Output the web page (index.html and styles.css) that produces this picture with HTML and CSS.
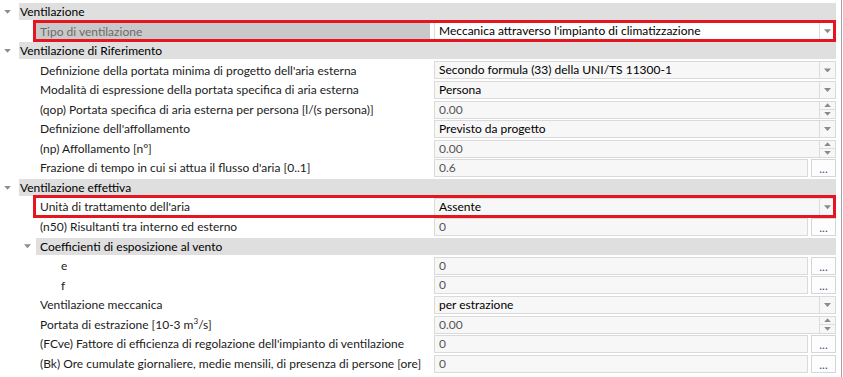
FILE: index.html
```html
<!DOCTYPE html>
<html lang="it">
<head>
    <meta charset="UTF-8">
    <meta name="viewport" content="width=device-width, initial-scale=1.0">
    <title>Ventilazione</title>
    <link rel="stylesheet" href="styles.css">
</head>
<body>
    <div class="grid">
        <div class="row cat"><span class="tog"></span><div class="band">Ventilazione</div></div>
        <div class="row prop sel mark">
            <div class="label">Tipo di ventilazione</div>
            <div class="val"><div class="box"><span class="txt">Meccanica attraverso l'impianto di climatizzazione</span><span class="drop"></span></div></div>
        </div>

        <div class="row cat"><span class="tog"></span><div class="band">Ventilazione di Riferimento</div></div>
        <div class="row prop">
            <div class="label">Definizione della portata minima di progetto dell'aria esterna</div>
            <div class="val"><div class="box"><span class="txt">Secondo formula (33) della UNI/TS 11300-1</span><span class="drop"></span></div></div>
        </div>
        <div class="row prop">
            <div class="label">Modalità di espressione della portata specifica di aria esterna</div>
            <div class="val"><div class="box"><span class="txt">Persona</span><span class="drop"></span></div></div>
        </div>
        <div class="row prop">
            <div class="label">(qop) Portata specifica di aria esterna per persona [l/(s persona)]</div>
            <div class="val"><div class="box"><span class="txt num">0.00</span><span class="spin"><i class="up"></i><i class="down"></i></span></div></div>
        </div>
        <div class="row prop">
            <div class="label">Definizione dell'affollamento</div>
            <div class="val"><div class="box"><span class="txt">Previsto da progetto</span><span class="drop"></span></div></div>
        </div>
        <div class="row prop">
            <div class="label">(np) Affollamento [n°]</div>
            <div class="val"><div class="box"><span class="txt num">0.00</span><span class="spin"><i class="up"></i><i class="down"></i></span></div></div>
        </div>
        <div class="row prop">
            <div class="label">Frazione di tempo in cui si attua il flusso d'aria [0..1]</div>
            <div class="val"><div class="box"><span class="txt num">0.6</span></div><span class="btn">...</span></div>
        </div>

        <div class="row cat"><span class="tog"></span><div class="band">Ventilazione effettiva</div></div>
        <div class="row prop mark">
            <div class="label">Unità di trattamento dell'aria</div>
            <div class="val"><div class="box"><span class="txt">Assente</span><span class="drop"></span></div></div>
        </div>
        <div class="row prop">
            <div class="label">(n50) Risultanti tra interno ed esterno</div>
            <div class="val"><div class="box"><span class="txt num">0</span></div><span class="btn">...</span></div>
        </div>
        <div class="row cat sub"><span class="tog"></span><div class="band">Coefficienti di esposizione al vento</div></div>
        <div class="row prop deep">
            <div class="label">e</div>
            <div class="val"><div class="box"><span class="txt num">0</span></div><span class="btn">...</span></div>
        </div>
        <div class="row prop deep">
            <div class="label">f</div>
            <div class="val"><div class="box"><span class="txt num">0</span></div><span class="btn">...</span></div>
        </div>
        <div class="row prop">
            <div class="label">Ventilazione meccanica</div>
            <div class="val"><div class="box"><span class="txt">per estrazione</span><span class="drop"></span></div></div>
        </div>
        <div class="row prop">
            <div class="label">Portata di estrazione [10-3 m<sup>3</sup>/s]</div>
            <div class="val"><div class="box"><span class="txt num">0.00</span><span class="spin"><i class="up"></i><i class="down"></i></span></div></div>
        </div>
        <div class="row prop">
            <div class="label">(FCve) Fattore di efficienza di regolazione dell'impianto di ventilazione</div>
            <div class="val"><div class="box"><span class="txt num">0</span></div><span class="btn">...</span></div>
        </div>
        <div class="row prop">
            <div class="label">(Bk) Ore cumulate giornaliere, medie mensili, di presenza di persone [ore]</div>
            <div class="val"><div class="box"><span class="txt num">0</span></div><span class="btn">...</span></div>
        </div>
    </div>
</body>
</html>
```

FILE: styles.css
```css
body{
    margin: 0;
    background: #fff;
    font-family: Lato, "Noto Sans", sans-serif;
    font-size: 12px;
    color: #1b1b1b;
}
.grid{
    width: 836px;
    height: 375px;
    padding: 2px 5px 0 0;
    border-right: 1px solid #a3a3a3;
}
.row{
    display: flex;
    align-items: center;
    height: 19.55px;
    position: relative;
    white-space: nowrap;
}

/* categorie */
.tog{
    width: 19px;
    height: 100%;
    display: flex;
    align-items: center;
    padding-left: 4px;
    box-sizing: border-box;
}
.tog::before{
    content: "";
    width: 7px;
    height: 4px;
    background: #8c8c8c;
    clip-path: polygon(0 0, 100% 0, 50% 100%);
}
.band{
    flex: 1;
    height: 17px;
    line-height: 17px;
    padding-left: 1px;
    background: #dfdfdf;
    color: #000;
}
.sub{
    padding-left: 19px;
}
.sub .tog{
    width: 17px;
    padding-left: 5px;
}
.sub .band{
    padding-left: 4px;
}

/* proprieta */
.prop{
    padding-left: 36px;
}
.label{
    flex: 1;
    height: 100%;
    line-height: 19px;
    padding-left: 4px;
    margin-right: 4px;
    overflow: hidden;
}
.deep .label{
    padding-left: 25px;
}
.label sup{
    font-size: 8px;
    line-height: 0;
}
.sel .label{
    background: #c9c9c9;
    color: #6b6b6b;
}
.val{
    width: 402px;
    height: 18px;
    display: flex;
}
.box{
    flex: 1;
    display: flex;
    border: 1px solid #dadada;
    background: #f7f7f7;
}
.sel .box{
    background: #fff;
}
.txt{
    flex: 1;
    padding-left: 4px;
    line-height: 16px;
    color: #000;
}
.txt.num{
    color: #555;
}
.drop{
    width: 15px;
    border-left: 1px solid #dcdcdc;
    display: flex;
    align-items: center;
    justify-content: center;
}
.drop::before{
    content: "";
    width: 7px;
    height: 4px;
    background: #8a8a8a;
    clip-path: polygon(0 0, 100% 0, 50% 100%);
}
.spin{
    width: 15px;
    border-left: 1px solid #dcdcdc;
    display: flex;
    flex-direction: column;
}
.spin i{
    flex: 1;
    display: flex;
    align-items: center;
    justify-content: center;
}
.spin i + i{
    border-top: 1px solid #dcdcdc;
}
.spin i::before{
    content: "";
    width: 7px;
    height: 4px;
    background: #8a8a8a;
}
.spin .up::before{
    clip-path: polygon(50% 0, 100% 100%, 0 100%);
}
.spin .down::before{
    clip-path: polygon(0 0, 100% 0, 50% 100%);
}
.btn{
    width: 25px;
    margin-left: 3px;
    border: 1px solid #d6d6d6;
    background: #fdfdfd;
    color: #4a4a80;
    text-align: center;
    line-height: 18px;
    box-sizing: border-box;
}

/* evidenziazione */
.mark::after{
    content: "";
    position: absolute;
    left: 33px;
    right: 0;
    top: -2px;
    bottom: -1px;
    border: 3px solid #e5161f;
    pointer-events: none;
}
```
